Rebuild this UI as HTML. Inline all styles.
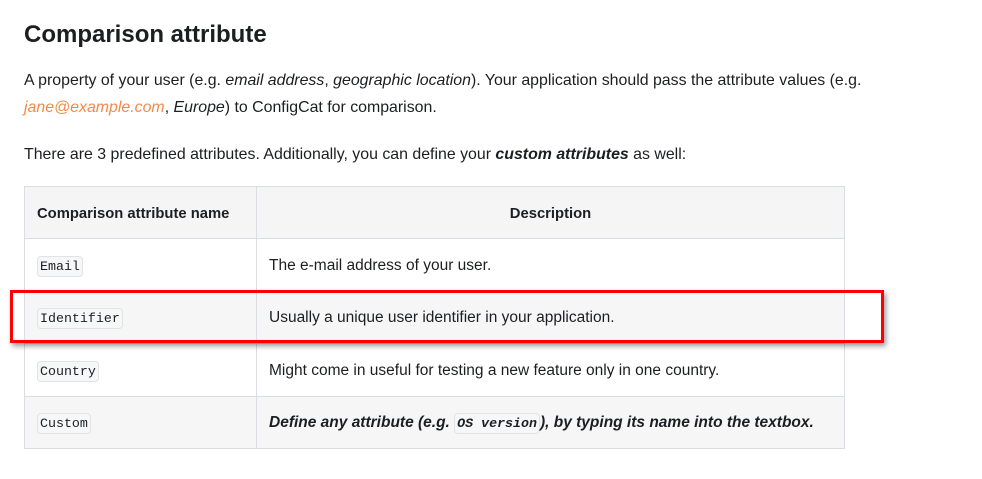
<!DOCTYPE html>
<html><head><meta charset="utf-8"><style>
body{margin:0;width:982px;height:479px;background:#fff;font-family:"Liberation Sans",sans-serif;color:#1c1e21;position:relative;overflow:hidden}
h2{position:absolute;left:24px;top:19px;margin:0;font-size:24px;font-weight:bold;line-height:32px}
p{position:absolute;left:24px;margin:0;font-size:15.9px;line-height:27px}
.o{color:#f08a4b}
table{position:absolute;left:24px;top:186px;border-collapse:collapse;font-size:15.5px;width:821px}
td,th{border:1px solid #dadde1;padding:2px 12px 0;height:49.4px;box-sizing:content-box;text-align:left}
th{background:#f5f5f5;font-weight:bold;font-size:14.8px}
th:nth-child(2){text-align:center}
tr.g td{background:#f6f6f6}
td:first-child,th:first-child{width:207px}
code{font-family:"Liberation Mono",monospace;font-size:13.3px;border:1px solid #e3e3e3;border-radius:4px;background:#f6f7f8;padding:2px 2px}
.box{position:absolute;left:10px;top:290px;width:868px;height:47px;border:3px solid #f00;box-shadow:2px 3px 5px rgba(0,0,0,.4)}
</style></head><body>
<h2>Comparison attribute</h2>
<p style="top:67px;width:900px">A property of your user (e.g. <i>email address</i>, <i>geographic location</i>). Your application should pass the attribute values (e.g.<br><i class="o">jane@example.com</i>, <i>Europe</i>) to ConfigCat for comparison.</p>
<p style="top:141px">There are 3 predefined attributes. Additionally, you can define your <b><i>custom attributes</i></b> as well:</p>
<table>
<tr><th>Comparison attribute name</th><th>Description</th></tr>
<tr><td><code>Email</code></td><td>The e-mail address of your user.</td></tr>
<tr class="g"><td><code>Identifier</code></td><td>Usually a unique user identifier in your application.</td></tr>
<tr><td><code>Country</code></td><td>Might come in useful for testing a new feature only in one country.</td></tr>
<tr class="g"><td><code>Custom</code></td><td><b><i>Define any attribute (e.g. <code>OS version</code>), by typing its name into the textbox.</i></b></td></tr>
</table>
<div class="box"></div>
</body></html>
